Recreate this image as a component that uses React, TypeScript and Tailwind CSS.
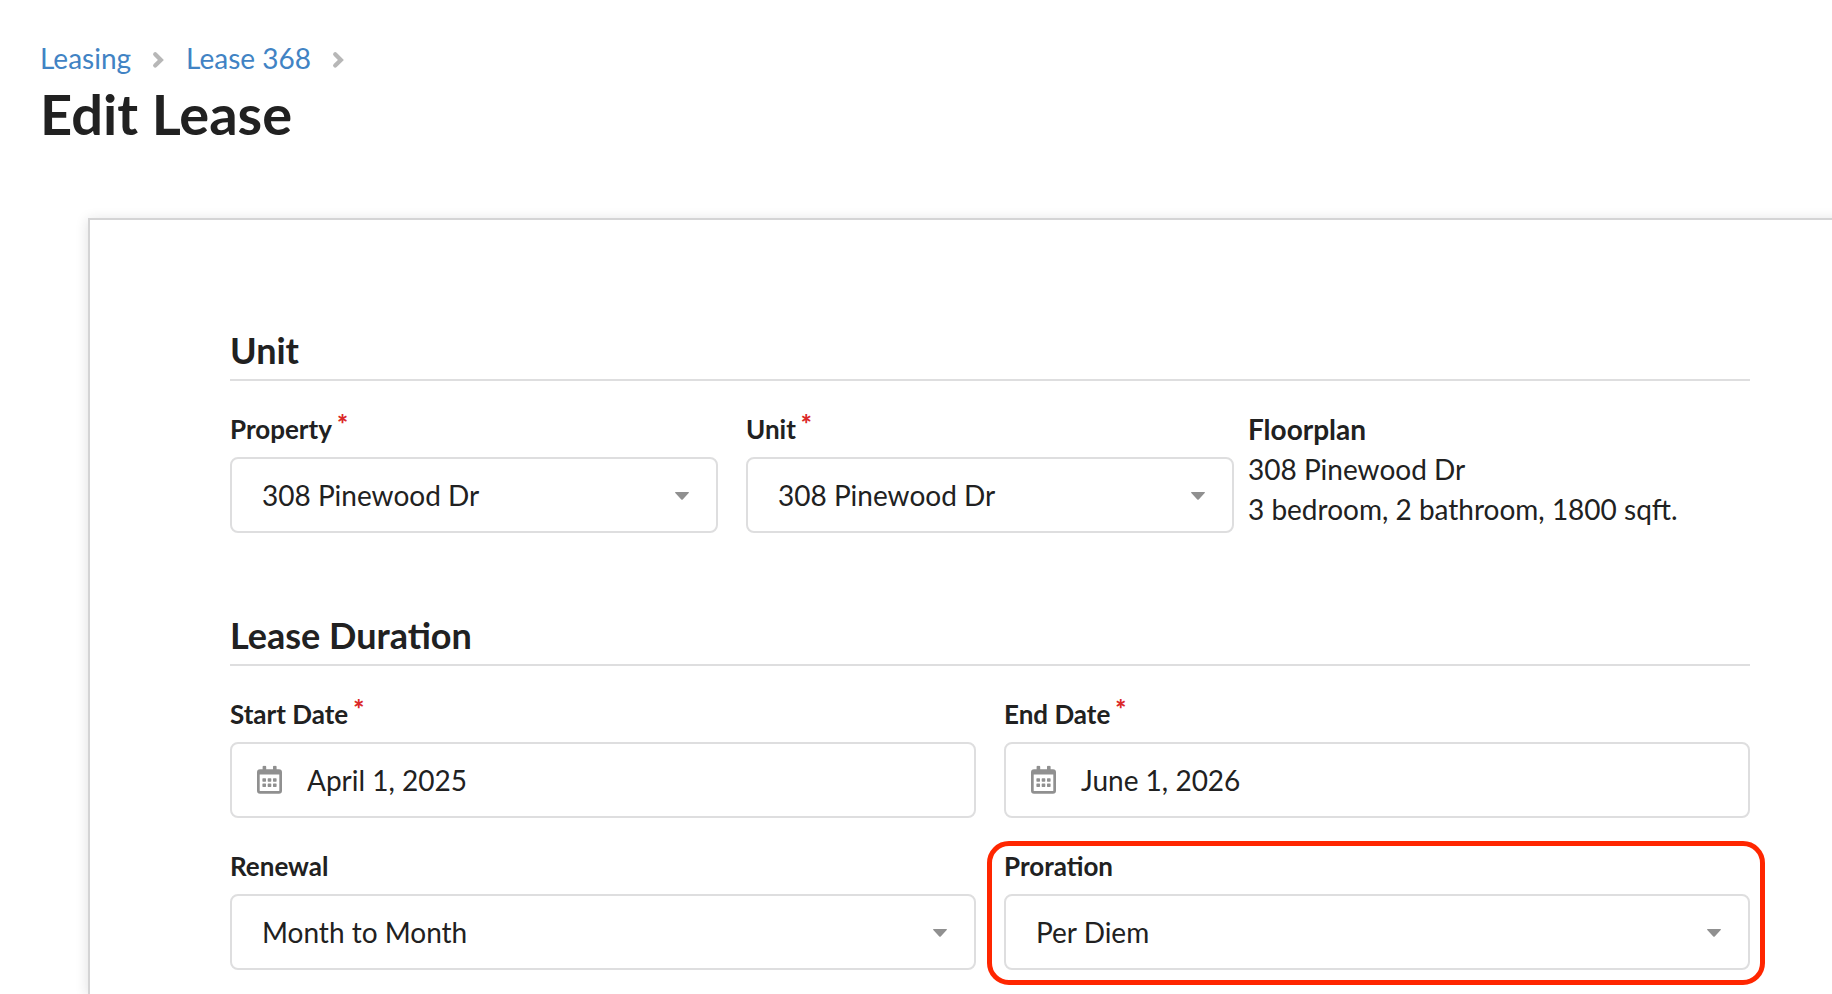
import React, { useId, useState } from "react";

type Option = string;

function ChevronDivider() {
  return (
    <svg className="h-7 w-[29px] shrink-0 text-[#b7b7b7]" viewBox="0 0 29 28" fill="none" aria-hidden="true">
      <path
        d="M11.2 10.2 L16.9 15.9 L11.2 21.6"
        stroke="currentColor"
        strokeWidth="4.2"
        strokeLinecap="round"
        strokeLinejoin="miter"
      />
    </svg>
  );
}

function CalendarIcon() {
  return (
    <svg
      className="pointer-events-none absolute left-[27px] top-1/2 h-[29px] w-[25px] -translate-y-1/2 text-[#909090]"
      viewBox="0 0 25 29"
      fill="currentColor"
      aria-hidden="true"
    >
      <path
        fillRule="evenodd"
        d="M5.6 1.2a1 1 0 0 1 1-1h1.6a1 1 0 0 1 1 1v2.6h6.8v-2.6a1 1 0 0 1 1-1h1.6a1 1 0 0 1 1 1v2.6h2.4a3 3 0 0 1 3 3v18.4a3 3 0 0 1-3 3h-19a3 3 0 0 1-3-3v-18.4a3 3 0 0 1 3-3h2.6zM2.7 9v16a.5.5 0 0 0 .5.5h18.6a.5.5 0 0 0 .5-.5v-16z"
      />
      <rect x="5.4" y="12.8" width="3.6" height="3.4" rx="0.6" />
      <rect x="10.7" y="12.8" width="3.6" height="3.4" rx="0.6" />
      <rect x="16" y="12.8" width="3.6" height="3.4" rx="0.6" />
      <rect x="5.4" y="18" width="3.6" height="3.4" rx="0.6" />
      <rect x="10.7" y="18" width="3.6" height="3.4" rx="0.6" />
      <rect x="16" y="18" width="3.6" height="3.4" rx="0.6" />
    </svg>
  );
}

function FieldLabel({ id, text, required }: { id: string; text: string; required?: boolean }) {
  return (
    <label htmlFor={id} className="mb-2 block text-[26px] leading-10 font-bold">
      {text}
      {required && <span className="-mt-[5px] ml-[5px] inline-block align-top font-black text-[#db2828]">*</span>}
    </label>
  );
}

function SelectField({ label, required, options }: { label: string; required?: boolean; options: Option[] }) {
  const id = useId();
  const [value, setValue] = useState(options[0]);
  return (
    <div>
      <FieldLabel id={id} text={label} required={required} />
      <div className="relative">
        <select
          id={id}
          value={value}
          onChange={(e) => setValue(e.target.value)}
          className="block h-[76px] w-full appearance-none rounded-lg border-2 border-[#dededf] bg-white pr-16 pl-[30px] text-[28px] leading-10"
        >
          {options.map((o) => (
            <option key={o}>{o}</option>
          ))}
        </select>
        <svg
          className="pointer-events-none absolute top-[35px] right-[29px] h-2 w-3.5 text-[#909090]"
          viewBox="0 0 14 8"
          fill="currentColor"
          aria-hidden="true"
        >
          <path d="M0.6 0h12.8c.6 0 .7.6.3 1L7.7 7.5c-.4.4-1 .4-1.4 0L.3 1C-.1.6 0 0 .6 0z" />
        </svg>
      </div>
    </div>
  );
}

function DateField({ label, initial }: { label: string; initial: string }) {
  const id = useId();
  const [value, setValue] = useState(initial);
  return (
    <div>
      <FieldLabel id={id} text={label} required />
      <div className="relative">
        <input
          id={id}
          type="text"
          value={value}
          onChange={(e) => setValue(e.target.value)}
          className="block h-[76px] w-full rounded-lg border-2 border-[#dededf] bg-white pr-7 pl-[75px] text-[28px] leading-10"
        />
        <CalendarIcon />
      </div>
    </div>
  );
}

function SectionHeading({ children }: { children: React.ReactNode }) {
  return (
    <h2 className="mb-7 border-b-2 border-[#dededf] pb-1.5 text-[36px] leading-[46px] font-bold">{children}</h2>
  );
}

export default function App() {
  return (
    <div className="flex min-h-screen flex-col overflow-x-clip bg-white font-['Lato',sans-serif] text-[28px] leading-10 text-[#212121]">
      <header className="px-10 pt-[38px]">
        <nav aria-label="Breadcrumb" className="flex items-center gap-[13px] text-[#4183c4]">
          <a href="#leasing">Leasing</a>
          <ChevronDivider />
          <a href="#lease-368">Lease 368</a>
          <ChevronDivider />
        </nav>
        <h1 className="text-[56px] leading-[72px] font-bold">Edit Lease</h1>
      </header>

      <main className="mt-[68px] -mr-[60px] ml-[88px] flex-1 border-2 border-b-0 border-[#d4d4d5] px-[140px] pt-[107px] shadow-[0_2px_12px_rgba(34,36,38,0.15)]">
        <form>
          <section>
            <SectionHeading>Unit</SectionHeading>
            <div className="grid grid-cols-3 gap-7">
              <SelectField label="Property" required options={["308 Pinewood Dr"]} />
              <SelectField label="Unit" required options={["308 Pinewood Dr"]} />
              <div className="-ml-3.5">
                <p className="font-bold">Floorplan</p>
                <p>308 Pinewood Dr</p>
                <p>3 bedroom, 2 bathroom, 1800 sqft.</p>
              </div>
            </div>
          </section>

          <section className="mt-[79px]">
            <SectionHeading>Lease Duration</SectionHeading>
            <div className="grid grid-cols-2 gap-7">
              <DateField label="Start Date" initial="April 1, 2025" />
              <DateField label="End Date" initial="June 1, 2026" />
              <SelectField label="Renewal" options={["Month to Month", "None"]} />
              <div className="relative">
                <SelectField label="Proration" options={["Per Diem", "None"]} />
                <div className="pointer-events-none absolute -top-[5px] -right-[15px] -bottom-[15px] -left-[17px] rounded-[22px] border-[5px] border-[#ff2600]" />
              </div>
            </div>
          </section>
        </form>
      </main>
    </div>
  );
}
